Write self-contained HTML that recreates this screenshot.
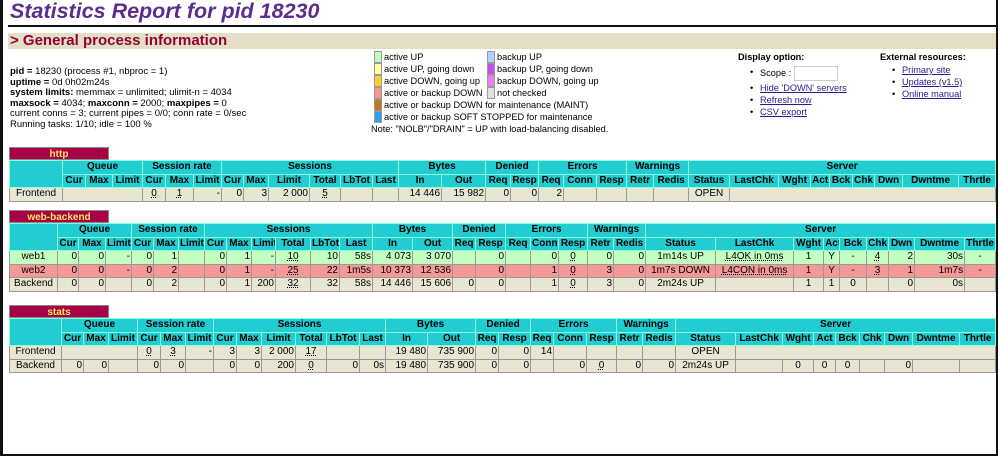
<!DOCTYPE html>
<html><head><meta charset="utf-8">
<style>
*{margin:0;padding:0;box-sizing:border-box}
body{width:1000px;height:457px;background:#fff;font-family:"Liberation Sans",Arial,sans-serif;font-size:10px;color:#000;position:relative;overflow:hidden}
.frame{position:absolute;left:0;top:0;width:998px;height:456px;border-left:3px solid #111;border-right:2px solid #111;border-bottom:2px solid #111}
h1{position:absolute;left:10px;top:-1px;font-size:21.5px;font-style:italic;font-weight:bold;color:#5b2d8e;white-space:nowrap}
.hr{position:absolute;left:8px;top:25px;width:990px;height:2px;background:#111}
.sec{position:absolute;left:8px;top:33px;width:988px;height:16px;background:#e2dfc6;color:#940038;font-weight:bold;font-size:15px;line-height:16px;padding-left:2px}
.info{position:absolute;left:10px;top:67px;font-size:9.5px;line-height:10.6px;white-space:nowrap}
.leg{position:absolute;font-size:9.2px;line-height:12px;white-space:nowrap}
.leg div{height:12px;position:relative;padding-left:10px}
.leg i{position:absolute;left:0;top:0;width:8px;height:12px;border:1px solid #999}
.opt{position:absolute;font-size:9.2px;line-height:12px;white-space:nowrap}
.opt b{display:block}
.opt ul{list-style:none;margin-top:3px}
.opt li{padding-left:22px;position:relative;height:12px}
.opt li:before{content:"•";position:absolute;left:12px}
.opt a{color:#2a1a8e;text-decoration:underline}
.tab{position:absolute;left:9px;width:100px;height:13px;background:#a80046;color:#ffe85a;font-weight:bold;text-align:center;font-size:10px;line-height:13px;border:1px solid #888}
table{position:absolute;left:9px;width:986px;table-layout:fixed;border-collapse:collapse;font-size:10px}
td,th{border:1px solid #999;height:13.5px;line-height:12px;padding:0 1px;white-space:nowrap;overflow:hidden}
th{background:#22cdd2;font-weight:bold;text-align:center;border-color:#8fd}
td{background:#e8e5d2;text-align:right}
td.l{text-align:center}
td.c{text-align:center}
tr.up td{background:#c4ffc0}
tr.dn td{background:#f49898}
u{text-decoration:underline dotted}
</style></head><body>
<div class="frame"></div>
<h1>Statistics Report for pid 18230</h1>
<div class="hr"></div>
<div class="sec">&gt; General process information</div>
<div class="info">
<b>pid = </b>18230 (process #1, nbproc = 1)<br>
<b>uptime = </b>0d 0h02m24s<br>
<b>system limits:</b> memmax = unlimited; ulimit-n = 4034<br>
<b>maxsock = </b>4034; <b>maxconn = </b>2000; <b>maxpipes = </b>0<br>
current conns = 3; current pipes = 0/0; conn rate = 0/sec<br>
Running tasks: 1/10; idle = 100 %
</div>
<div class="leg" style="left:374px;top:51px">
<div><i style="background:#c0ffc0"></i>active UP</div>
<div><i style="background:#ffffa0"></i>active UP, going down</div>
<div><i style="background:#ffcc30"></i>active DOWN, going up</div>
<div><i style="background:#ff9090"></i>active or backup DOWN</div>
<div><i style="background:#c07820"></i>active or backup DOWN for maintenance (MAINT)</div>
<div><i style="background:#30a0f0"></i>active or backup SOFT STOPPED for maintenance</div>
</div>
<div class="leg" style="left:487px;top:51px">
<div><i style="background:#b0d0ff"></i>backup UP</div>
<div><i style="background:#c050f0"></i>backup UP, going down</div>
<div><i style="background:#f080f0"></i>backup DOWN, going up</div>
<div><i style="background:#e0e0e0"></i>not checked</div>
</div>
<div class="leg" style="left:371px;top:123px">Note: "NOLB"/"DRAIN" = UP with load-balancing disabled.</div>
<div class="opt" style="left:738px;top:51px"><b>Display option:</b>
<ul><li style="height:16px">Scope : <span style="display:inline-block;width:44px;height:15px;border:1px solid #ccc;vertical-align:middle"></span></li>
<li><a>Hide 'DOWN' servers</a></li><li><a>Refresh now</a></li><li><a>CSV export</a></li></ul></div>
<div class="opt" style="left:880px;top:51px"><b>External resources:</b>
<ul style="margin-top:1px"><li><a>Primary site</a></li><li><a>Updates (v1.5)</a></li><li><a>Online manual</a></li></ul></div>

<div class="tab" style="top:147px">http</div>
<table style="top:160px">
<colgroup><col style="width:53px"><col style="width:23px"><col style="width:27px"><col style="width:30px"><col style="width:23px"><col style="width:28px"><col style="width:28px"><col style="width:22px"><col style="width:25px"><col style="width:41px"><col style="width:31px"><col style="width:32px"><col style="width:26px"><col style="width:43px"><col style="width:44px"><col style="width:25px"><col style="width:28px"><col style="width:25px"><col style="width:33px"><col style="width:30px"><col style="width:27px"><col style="width:35px"><col style="width:41px"><col style="width:49px"><col style="width:32px"><col style="width:19px"><col style="width:23px"><col style="width:22px"><col style="width:28px"><col style="width:56px"><col style="width:37px"></colgroup>
<tr><th rowspan="2"></th><th colspan="3">Queue</th><th colspan="3">Session rate</th><th colspan="6">Sessions</th><th colspan="2">Bytes</th><th colspan="2">Denied</th><th colspan="3">Errors</th><th colspan="2">Warnings</th><th colspan="9">Server</th></tr>
<tr><th>Cur</th><th>Max</th><th>Limit</th><th>Cur</th><th>Max</th><th>Limit</th><th>Cur</th><th>Max</th><th>Limit</th><th>Total</th><th>LbTot</th><th>Last</th><th>In</th><th>Out</th><th>Req</th><th>Resp</th><th>Req</th><th>Conn</th><th>Resp</th><th>Retr</th><th>Redis</th><th>Status</th><th>LastChk</th><th>Wght</th><th>Act</th><th>Bck</th><th>Chk</th><th>Dwn</th><th>Dwntme</th><th>Thrtle</th></tr>
<tr><td class="l">Frontend</td><td colspan="3"></td><td class="c"><u>0</u></td><td class="c"><u>1</u></td><td>-</td><td>0</td><td>3</td><td>2 000</td><td class="c"><u>5</u></td><td></td><td></td><td>14 446</td><td>15 982</td><td>0</td><td>0</td><td>2</td><td></td><td></td><td></td><td></td><td class="c">OPEN</td><td colspan="8"></td></tr>
</table>

<div class="tab" style="top:210px">web-backend</div>
<table style="top:223px">
<colgroup><col style="width:48px"><col style="width:21px"><col style="width:27px"><col style="width:26px"><col style="width:22px"><col style="width:25px"><col style="width:26px"><col style="width:22px"><col style="width:25px"><col style="width:24px"><col style="width:35px"><col style="width:29px"><col style="width:33px"><col style="width:40px"><col style="width:40px"><col style="width:23px"><col style="width:30px"><col style="width:25px"><col style="width:28px"><col style="width:29px"><col style="width:26px"><col style="width:32px"><col style="width:70px"><col style="width:78px"><col style="width:30px"><col style="width:16px"><col style="width:27px"><col style="width:22px"><col style="width:26px"><col style="width:50px"><col style="width:31px"></colgroup>
<tr><th rowspan="2"></th><th colspan="3">Queue</th><th colspan="3">Session rate</th><th colspan="6">Sessions</th><th colspan="2">Bytes</th><th colspan="2">Denied</th><th colspan="3">Errors</th><th colspan="2">Warnings</th><th colspan="9">Server</th></tr>
<tr><th>Cur</th><th>Max</th><th>Limit</th><th>Cur</th><th>Max</th><th>Limit</th><th>Cur</th><th>Max</th><th>Limit</th><th>Total</th><th>LbTot</th><th>Last</th><th>In</th><th>Out</th><th>Req</th><th>Resp</th><th>Req</th><th>Conn</th><th>Resp</th><th>Retr</th><th>Redis</th><th>Status</th><th>LastChk</th><th>Wght</th><th>Act</th><th>Bck</th><th>Chk</th><th>Dwn</th><th>Dwntme</th><th>Thrtle</th></tr>
<tr class="up"><td class="l">web1</td><td>0</td><td>0</td><td>-</td><td>0</td><td>1</td><td></td><td>0</td><td>1</td><td>-</td><td class="c"><u>10</u></td><td>10</td><td>58s</td><td>4 073</td><td>3 070</td><td></td><td>0</td><td></td><td>0</td><td class="c"><u>0</u></td><td>0</td><td>0</td><td class="c">1m14s UP</td><td class="c"><u>L4OK in 0ms</u></td><td class="c">1</td><td class="c">Y</td><td class="c">-</td><td class="c"><u>4</u></td><td>2</td><td>30s</td><td class="c">-</td></tr>
<tr class="dn"><td class="l">web2</td><td>0</td><td>0</td><td>-</td><td>0</td><td>2</td><td></td><td>0</td><td>1</td><td>-</td><td class="c"><u>25</u></td><td>22</td><td>1m5s</td><td>10 373</td><td>12 536</td><td></td><td>0</td><td></td><td>1</td><td class="c"><u>0</u></td><td>3</td><td>0</td><td class="c">1m7s DOWN</td><td class="c"><u>L4CON in 0ms</u></td><td class="c">1</td><td class="c">Y</td><td class="c">-</td><td class="c"><u>3</u></td><td>1</td><td>1m7s</td><td class="c">-</td></tr>
<tr><td class="l">Backend</td><td>0</td><td>0</td><td></td><td>0</td><td>2</td><td></td><td>0</td><td>1</td><td>200</td><td class="c"><u>32</u></td><td>32</td><td>58s</td><td>14 446</td><td>15 606</td><td>0</td><td>0</td><td></td><td>1</td><td class="c"><u>0</u></td><td>3</td><td>0</td><td class="c">2m24s UP</td><td></td><td class="c">1</td><td class="c">1</td><td class="c">0</td><td></td><td>0</td><td>0s</td><td></td></tr>
</table>

<div class="tab" style="top:305px">stats</div>
<table style="top:318px">
<colgroup><col style="width:52px"><col style="width:22px"><col style="width:25px"><col style="width:29px"><col style="width:23px"><col style="width:25px"><col style="width:28px"><col style="width:23px"><col style="width:25px"><col style="width:34px"><col style="width:31px"><col style="width:33px"><col style="width:26px"><col style="width:42px"><col style="width:48px"><col style="width:23px"><col style="width:32px"><col style="width:23px"><col style="width:33px"><col style="width:30px"><col style="width:26px"><col style="width:33px"><col style="width:60px"><col style="width:47px"><col style="width:31px"><col style="width:22px"><col style="width:24px"><col style="width:25px"><col style="width:28px"><col style="width:47px"><col style="width:36px"></colgroup>
<tr><th rowspan="2"></th><th colspan="3">Queue</th><th colspan="3">Session rate</th><th colspan="6">Sessions</th><th colspan="2">Bytes</th><th colspan="2">Denied</th><th colspan="3">Errors</th><th colspan="2">Warnings</th><th colspan="9">Server</th></tr>
<tr><th>Cur</th><th>Max</th><th>Limit</th><th>Cur</th><th>Max</th><th>Limit</th><th>Cur</th><th>Max</th><th>Limit</th><th>Total</th><th>LbTot</th><th>Last</th><th>In</th><th>Out</th><th>Req</th><th>Resp</th><th>Req</th><th>Conn</th><th>Resp</th><th>Retr</th><th>Redis</th><th>Status</th><th>LastChk</th><th>Wght</th><th>Act</th><th>Bck</th><th>Chk</th><th>Dwn</th><th>Dwntme</th><th>Thrtle</th></tr>
<tr><td class="l">Frontend</td><td colspan="3"></td><td class="c"><u>0</u></td><td class="c"><u>3</u></td><td>-</td><td>3</td><td>3</td><td>2 000</td><td class="c"><u>17</u></td><td></td><td></td><td>19 480</td><td>735 900</td><td>0</td><td>0</td><td>14</td><td></td><td></td><td></td><td></td><td class="c">OPEN</td><td colspan="8"></td></tr>
<tr><td class="l">Backend</td><td>0</td><td>0</td><td></td><td>0</td><td>0</td><td></td><td>0</td><td>0</td><td>200</td><td class="c"><u>0</u></td><td>0</td><td>0s</td><td>19 480</td><td>735 900</td><td>0</td><td>0</td><td></td><td>0</td><td class="c"><u>0</u></td><td>0</td><td>0</td><td class="c">2m24s UP</td><td></td><td class="c">0</td><td class="c">0</td><td class="c">0</td><td></td><td>0</td><td></td><td></td></tr>
</table>
</body></html>
